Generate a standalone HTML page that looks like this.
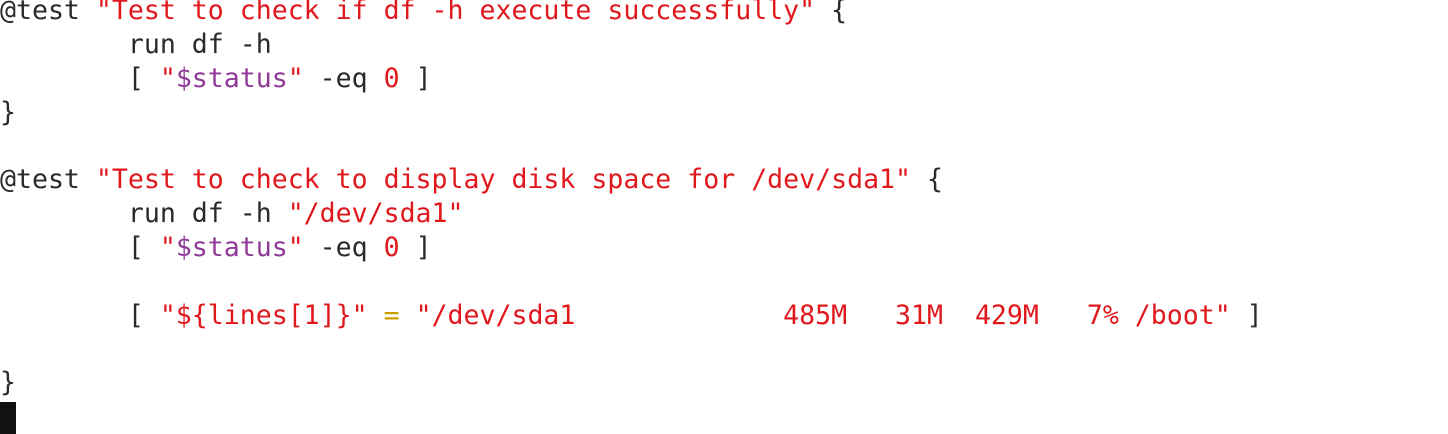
<!DOCTYPE html>
<html><head><meta charset="utf-8"><style>
html,body{margin:0;padding:0;background:#fff;width:1448px;height:434px;overflow:hidden;}
pre{position:absolute;left:0;top:-6px;margin:0;font-family:"DejaVu Sans Mono","Liberation Mono",monospace;font-size:26.55px;line-height:33.85px;color:#2a2a2a;}
.r{color:#e0181c}.p{color:#8e3a96}.y{color:#c9a000}
.cur{position:absolute;left:0;top:402px;width:16px;height:32px;background:#111;}
</style></head><body>
<pre>@test <span class="r">"Test to check if df -h execute successfully"</span> {
        run df -h
        [ <span class="r">"</span><span class="p">$status</span><span class="r">"</span> -eq <span class="r">0</span> ]
}

@test <span class="r">"Test to check to display disk space for /dev/sda1"</span> {
        run df -h <span class="r">"/dev/sda1"</span>
        [ <span class="r">"</span><span class="p">$status</span><span class="r">"</span> -eq <span class="r">0</span> ]

        [ <span class="r">"${lines[1]}"</span> <span class="y">=</span> <span class="r">"/dev/sda1             485M   31M  429M   7% /boot"</span> ]

}</pre>
<div class="cur"></div>
</body></html>
